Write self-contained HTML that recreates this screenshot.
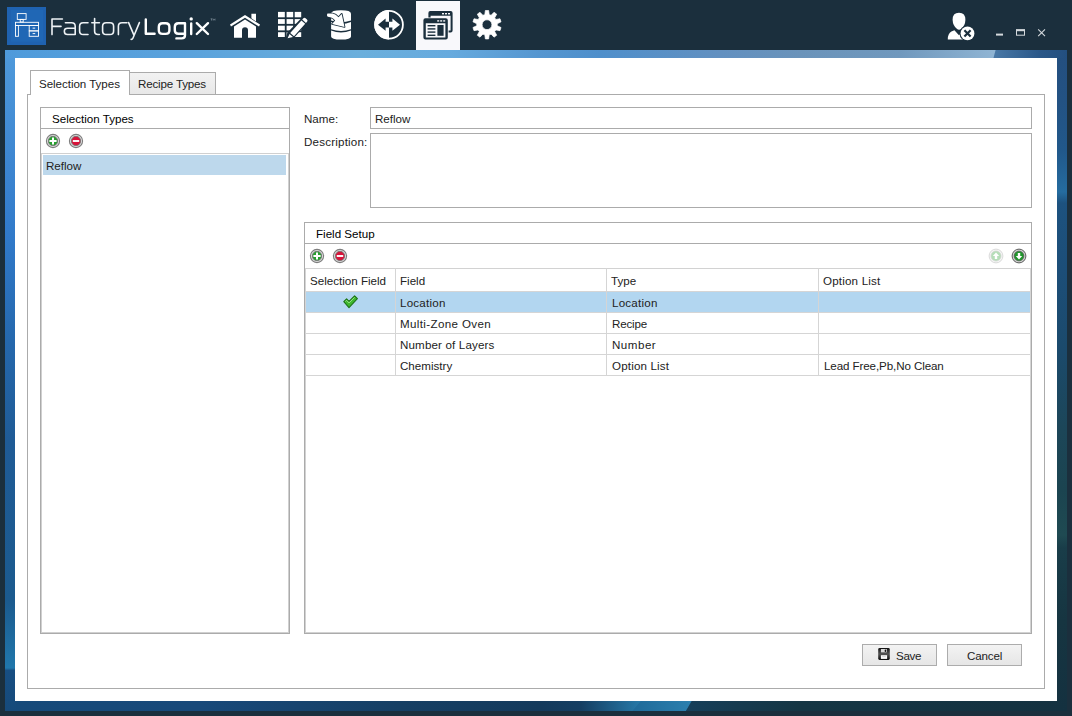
<!DOCTYPE html>
<html>
<head>
<meta charset="utf-8">
<title>FactoryLogix</title>
<style>
*{box-sizing:border-box;margin:0;padding:0}
html,body{width:1072px;height:716px;overflow:hidden;background:#1b2f3d}
body{font-family:"Liberation Sans",sans-serif;font-size:11.6px;color:#222;position:relative}
.abs{position:absolute}
#topbar{left:0;top:0;width:1072px;height:50px;background:#1b2f3d}
#bg{left:5px;top:50px;width:1062px;height:661px;overflow:hidden}
#panel{left:15px;top:58px;width:1042px;height:643px;background:#fff}
.t{position:absolute;white-space:nowrap;line-height:14px;height:14px}
.box{position:absolute;border:1px solid #ababab;background:#fff}
.hl{position:absolute;height:1px;background:#ababab}
.vl{position:absolute;width:1px;background:#d5d5d5}
.gl{position:absolute;height:1px;background:#d5d5d5}
.btn{position:absolute;border:1px solid #acacac;background:linear-gradient(#f3f3f3,#e6e6e6);height:22px;width:75px}
</style>
</head>
<body>
<div id="bg" class="abs">
<svg width="1062" height="661" viewBox="5 50 1062 661"><defs><linearGradient id="gl" gradientUnits="userSpaceOnUse" x1="0" y1="50" x2="0" y2="711"><stop offset="0.0000" stop-color="#4f9adb"/><stop offset="0.1513" stop-color="#3f88d2"/><stop offset="0.2874" stop-color="#3079c9"/><stop offset="0.4387" stop-color="#2568ad"/><stop offset="0.5900" stop-color="#1f5b96"/><stop offset="0.8321" stop-color="#1b5a8e"/><stop offset="0.9349" stop-color="#2077ab"/><stop offset="0.9387" stop-color="#174e82"/><stop offset="1.0000" stop-color="#164a7a"/></linearGradient><linearGradient id="gt" gradientUnits="userSpaceOnUse" x1="5" y1="0" x2="993" y2="0"><stop offset="0.0000" stop-color="#4f9bdb"/><stop offset="0.1771" stop-color="#5aa2dc"/><stop offset="0.3593" stop-color="#6bafdc"/><stop offset="0.4504" stop-color="#66aade"/><stop offset="0.5415" stop-color="#5596d0"/><stop offset="0.6022" stop-color="#4f8fcb"/><stop offset="0.7237" stop-color="#6290c0"/><stop offset="0.8047" stop-color="#6a93ba"/><stop offset="0.9059" stop-color="#7098bd"/><stop offset="1.0000" stop-color="#8fb4d3"/></linearGradient><linearGradient id="gt2" gradientUnits="userSpaceOnUse" x1="993" y1="0" x2="1067" y2="0"><stop offset="0.0000" stop-color="#4a79a7"/><stop offset="0.6351" stop-color="#2a5788"/><stop offset="1.0000" stop-color="#234f7f"/></linearGradient><linearGradient id="gr" gradientUnits="userSpaceOnUse" x1="0" y1="50" x2="0" y2="711"><stop offset="0.0000" stop-color="#244f7f"/><stop offset="0.0756" stop-color="#235283"/><stop offset="0.1513" stop-color="#21588a"/><stop offset="0.2148" stop-color="#256c9f"/><stop offset="0.2315" stop-color="#1d527f"/><stop offset="0.3328" stop-color="#1c4e78"/><stop offset="0.4539" stop-color="#1b4a6c"/><stop offset="0.5749" stop-color="#1c4658"/><stop offset="0.6657" stop-color="#1b4450"/><stop offset="0.7337" stop-color="#1f4a52"/><stop offset="0.7534" stop-color="#193d49"/><stop offset="0.8623" stop-color="#163541"/><stop offset="1.0000" stop-color="#143140"/></linearGradient><linearGradient id="gb1" gradientUnits="userSpaceOnUse" x1="5" y1="0" x2="640" y2="0"><stop offset="0.0000" stop-color="#164a7a"/><stop offset="0.3071" stop-color="#18497a"/><stop offset="0.6220" stop-color="#163f64"/><stop offset="0.8425" stop-color="#143a5c"/><stop offset="0.9071" stop-color="#153e62"/><stop offset="1.0000" stop-color="#2679a8"/></linearGradient><linearGradient id="gb2" gradientUnits="userSpaceOnUse" x1="632" y1="0" x2="690" y2="0"><stop offset="0.0000" stop-color="#1f6a99"/><stop offset="1.0000" stop-color="#2b7fae"/></linearGradient><linearGradient id="gb3" gradientUnits="userSpaceOnUse" x1="686" y1="0" x2="1067" y2="0"><stop offset="0.0000" stop-color="#173f5a"/><stop offset="0.2992" stop-color="#153644"/><stop offset="1.0000" stop-color="#143140"/></linearGradient></defs><rect x="5" y="50" width="1062" height="661" fill="#1d5a94"/><rect x="5" y="50" width="1000" height="9" fill="url(#gt)"/><path d="M995.6,50 L1067,50 L1067,59 L993.2,59Z" fill="url(#gt2)"/><rect x="5" y="700" width="640" height="11" fill="url(#gb1)"/><path d="M641.6,700 L693,700 L686,711 L632.3,711Z" fill="url(#gb2)"/><path d="M692.2,700 L1067,700 L1067,711 L685.9,711Z" fill="url(#gb3)"/><rect x="5" y="58" width="11" height="653" fill="url(#gl)"/><path d="M5,50 H16 V58 L5,58Z" fill="url(#gl)" opacity="0.6"/><rect x="1056" y="58" width="11" height="653" fill="url(#gr)"/></svg>
</div>
<div id="topbar" class="abs"></div>
<svg class="abs" style="left:0;top:0" width="1072" height="50" viewBox="0 0 1072 50">
<!-- logo box -->
<rect x="7" y="7" width="39" height="38" fill="#1f62b0"/>
<rect x="11" y="9.6" width="32" height="32" fill="#2067b5"/>
<g fill="none" stroke="#fff" stroke-width="0.9">
<rect x="17.3" y="13.6" width="8.8" height="5.8"/>
<rect x="20.2" y="19.4" width="3" height="2.6"/>
<rect x="15.5" y="22.3" width="23" height="3.2"/>
<rect x="15.5" y="25.5" width="2.9" height="10.8"/>
<rect x="29.2" y="25.5" width="9.3" height="5.4"/>
<rect x="29.2" y="30.9" width="9.3" height="5.4"/>
</g>
<rect x="32.6" y="27.6" width="2.6" height="1.1" fill="#dfe9f5"/>
<rect x="32.6" y="33" width="2.6" height="1.1" fill="#dfe9f5"/>
<!-- Factory (thin) -->
<g fill="none" stroke="#eef2f5" stroke-width="1.6" stroke-linecap="round" stroke-linejoin="round">
<path d="M52,34.6 V19 H62.4 M52,26.4 H61"/>
<path d="M65.4,22.7 H71.6 Q75.2,22.7 75.2,26.2 V34.5 H67.6 Q64.4,34.5 64.4,31.8 V30.8 Q64.4,28.2 67.6,28.2 H75.2"/>
<path d="M88,22.7 H83.2 Q79.6,22.7 79.6,26.3 V30.9 Q79.6,34.5 83.2,34.5 H88"/>
<path d="M94.6,18.6 V31 Q94.6,34.5 98,34.5 H99.4 M91.8,22.7 H99.4"/>
<path d="M106.2,22.7 H110 Q113.6,22.7 113.6,26.3 V30.9 Q113.6,34.5 110,34.5 H106.2 Q102.6,34.5 102.6,30.9 V26.3 Q102.6,22.7 106.2,22.7Z"/>
<path d="M118.4,34.6 V26.3 Q118.4,22.7 122,22.7 H127"/>
<path d="M128.6,22.6 L133.6,34.4 M139.4,22.6 L133,38 Q132.4,39.4 131.2,39.4"/>
</g>
<!-- Logix (bold) -->
<g fill="none" stroke="#fff" stroke-width="2.4" stroke-linecap="round" stroke-linejoin="round">
<path d="M145.8,19.4 V33.8 H154.6"/>
<path d="M162.6,23.3 H165.6 Q169.4,23.3 169.4,27 V30.2 Q169.4,33.9 165.6,33.9 H162.6 Q158.8,33.9 158.8,30.2 V27 Q158.8,23.3 162.6,23.3Z"/>
<path d="M185,33.7 H178.4 Q174.8,33.7 174.8,30.2 V27 Q174.8,23.3 178.4,23.3 H185 V35.2 Q185,38.4 181.6,38.4 H176.4"/>
<path d="M191.2,23.4 V34"/>
<path d="M196.8,23.2 L208,34 M208,23.2 L196.8,34"/>
</g>
<circle cx="191.2" cy="18.9" r="1.7" fill="#fff"/>
<g fill="none" stroke="#8a99a5" stroke-width="0.6"><path d="M210.6,18.8 H212.4 M211.5,18.8 V20.6 M213.2,20.6 V18.8 L214.1,19.8 L215,18.8 V20.6"/></g>
<!-- home -->
<g fill="#fff">
<path d="M251.4,13.8 H256 V21.5 L251.4,18.2Z"/>
<path d="M245,15 L260,24.6 L259,26.6 L245,17.7 L231,26.6 L230,24.6Z"/>
<path d="M245,19.4 L256,26.4 V37.8 H248 V30.2 Q248,27.2 245,27.2 Q242,27.2 242,30.2 V37.8 H234 V26.4Z"/>
</g>
<!-- grid + pencil -->
<g fill="#fff">
<rect x="278" y="11.9" width="6.8" height="5.4"/><rect x="286.6" y="11.9" width="6.6" height="5.4"/><rect x="294.7" y="11.9" width="6.5" height="5.4"/>
<rect x="278" y="19.1" width="6.8" height="4.8"/><rect x="286.6" y="19.1" width="6.6" height="4.8"/><rect x="294.7" y="19.1" width="6.5" height="4.8"/>
<rect x="278" y="25.7" width="6.8" height="4.7"/><rect x="286.6" y="25.7" width="6.6" height="4.7"/><rect x="294.7" y="25.7" width="6.5" height="4.7"/>
<rect x="278" y="32.2" width="6.8" height="4.8"/><rect x="286.6" y="32.2" width="6.6" height="4.8"/><rect x="294.7" y="32.2" width="6.5" height="4.8"/>
</g>
<path d="M303.2,16.2 L309,21 L293.5,38.5 L285.4,39.6 L287.4,32.6Z" fill="#1b2f3d"/>
<path d="M303.4,18.2 Q304.4,17.2 305.6,18.2 L307,19.4 Q308,20.4 307.2,21.5 L306,22.9 L302.2,19.6Z M301.4,20.5 L305.2,23.8 L294,36.2 L290.2,33Z M289.5,33.9 L293,36.9 L287.6,38.3Z" fill="#fff"/>
<!-- database -->
<g fill="#fff">
<path d="M331.1,13.6 Q331.1,10.2 341,10.2 Q351,10.2 351,13.6 V20.6 Q346,22.4 341,22.4 Q336,22.4 331.1,20.6Z"/>
<path d="M331.1,22 Q336,23.9 341,23.9 Q346,23.9 351,22 V29.2 Q346,31 341,31 Q336,31 331.1,29.2Z"/>
<path d="M331.1,30.6 Q336,32.5 341,32.5 Q346,32.5 351,30.6 V36.4 Q351,39.5 341,39.5 Q331.1,39.5 331.1,36.4Z"/>
</g>
<g transform="translate(0.2,0.6)"><path d="M327.4,13 H332.6 Q335.6,13.4 338.3,16.7 L341.5,13.4 L344.3,26.3 L331.9,23.3 L335,19.8 Q333.4,17.6 331,16.8 L327.8,16.2 Q326.8,16 326.8,14.6 Q326.8,13 327.4,13Z" fill="#fff" stroke="#1b2f3d" stroke-width="1.8" stroke-linejoin="round"/><path d="M327.4,13 H332.6 Q335.6,13.4 338.3,16.7 L341.5,13.4 L344.3,26.3 L331.9,23.3 L335,19.8 Q333.4,17.6 331,16.8 L327.8,16.2 Q326.8,16 326.8,14.6 Q326.8,13 327.4,13Z" fill="#fff"/></g>

<!-- circle arrows -->
<circle cx="389" cy="24.7" r="13.9" fill="none" stroke="#fff" stroke-width="1.8"/>
<path d="M389,10 A14.7,14.7 0 0,0 389,39.4Z" fill="#fff"/>
<path d="M389,21.8 H385.6 V18.6 L378,24.7 L385.6,30.8 V27.6 H389Z" fill="#1b2f3d"/>
<path d="M389,21.8 H392.4 V18.6 L400,24.7 L392.4,30.8 V27.6 H389Z" fill="#fff"/>
<!-- selected windows -->
<rect x="416" y="1" width="44" height="49" fill="#f8f8fb"/>
<g fill="#1b2f3d">
<path d="M430.2,11 H450.6 Q452.6,11 452.6,13 V30.4 Q452.6,32.4 450.6,32.4 H448.6 V30.4 H450.6 V15.8 H430.6 V17.4 H428.4 V13 Q428.4,11 430.2,11Z"/>
<path d="M425.4,18.2 H445.8 Q447.8,18.2 447.8,20.2 V37.6 Q447.8,39.6 445.8,39.6 H425.4 Q423.4,39.6 423.4,37.6 V20.2 Q423.4,18.2 425.4,18.2Z M425.8,23.2 V37.4 H445.4 V23.2Z"/>
<rect x="427.6" y="25" width="7.8" height="1.4"/><rect x="427.6" y="28.2" width="7.8" height="1.4"/><rect x="427.6" y="31.4" width="7.8" height="1.4"/><rect x="427.6" y="34.6" width="7.8" height="1.4"/>
<rect x="437.4" y="25" width="6.2" height="10.8"/>
</g>
<g fill="#f8f8fb">
<rect x="442" y="13" width="2" height="1.4"/><rect x="445" y="13" width="2" height="1.4"/><rect x="448" y="13" width="2" height="1.4"/>
<rect x="437.2" y="20.2" width="2" height="1.4"/><rect x="440.2" y="20.2" width="2" height="1.4"/><rect x="443.2" y="20.2" width="2" height="1.4"/>
</g>
<!-- gear -->
<path d="M484.80,14.64 L485.36,10.49 L488.64,10.49 L489.20,14.64 L491.14,15.27 L494.02,12.24 L496.68,14.17 L494.69,17.85 L495.89,19.50 L500.00,18.75 L501.02,21.87 L497.25,23.68 L497.25,25.72 L501.02,27.53 L500.00,30.65 L495.89,29.90 L494.69,31.55 L496.68,35.23 L494.02,37.16 L491.14,34.13 L489.20,34.76 L488.64,38.91 L485.36,38.91 L484.80,34.76 L482.86,34.13 L479.98,37.16 L477.32,35.23 L479.31,31.55 L478.11,29.90 L474.00,30.65 L472.98,27.53 L476.75,25.72 L476.75,23.68 L472.98,21.87 L474.00,18.75 L478.11,19.50 L479.31,17.85 L477.32,14.17 L479.98,12.24 L482.86,15.27Z M491.90,24.70 A4.9,4.9 0 1,0 482.10,24.70 A4.9,4.9 0 1,0 491.90,24.70Z" fill="#fff" fill-rule="evenodd" stroke="#fff" stroke-width="0.7" stroke-linejoin="round"/>
<!-- user -->
<g fill="#fff">
<path d="M959,12.7 Q965.6,12.7 965.4,20 Q965.2,25.4 961.4,28.8 Q959,30.6 956.8,28.8 Q952.8,25.4 952.6,20 Q952.4,12.7 959,12.7Z"/>
<path d="M947.8,39.5 Q947.8,33.4 951.4,31.6 L954.4,30.2 L959,35.2 L962,32 L968,39.5Z"/>
</g>
<circle cx="967.5" cy="33.4" r="8" fill="#1b2f3d"/>
<circle cx="967.5" cy="33.4" r="6.9" fill="#fff"/>
<path d="M964.4,30.3 L970.6,36.5 M970.6,30.3 L964.4,36.5" stroke="#1b2f3d" stroke-width="2.2" fill="none"/>
<!-- window controls -->
<rect x="996" y="33.6" width="7" height="2" fill="#d4d9dd"/>
<rect x="1016.5" y="30" width="8" height="5.2" fill="none" stroke="#d4d9dd" stroke-width="1"/>
<rect x="1016" y="29.2" width="9" height="2" fill="#d4d9dd"/>
<path d="M1038.2,29.4 L1045,36.2 M1045,29.4 L1038.2,36.2" stroke="#d4d9dd" stroke-width="1.1" fill="none"/>
</svg>
<div id="panel" class="abs"></div>
<!-- tab control -->
<div class="box" style="left:27px;top:94px;width:1018px;height:595px"></div>
<div class="abs" style="left:129px;top:72px;width:87px;height:23px;border:1px solid #ababab;background:linear-gradient(#f2f2f2,#e8e8e8)"></div>
<div class="abs" style="left:30px;top:70px;width:100px;height:25px;border:1px solid #ababab;border-bottom:none;background:#fff"></div>
<div class="t" style="left:39px;top:77px;letter-spacing:-0.05px">Selection Types</div>
<div class="t" style="left:138px;top:77px;letter-spacing:-0.17px">Recipe Types</div>
<!-- left group -->
<div class="box" style="left:40px;top:107px;width:250px;height:527px"></div>
<div class="hl" style="left:40px;top:128px;width:250px"></div>
<div class="abs" style="left:41px;top:153px;width:248px;height:480px;border:1px solid #d0d0d0"></div>
<div class="t" style="left:52px;top:112px;color:#000">Selection Types</div>
<svg class="abs" style="left:45px;top:133px" width="16" height="16" viewBox="-8 -8 16 16"><circle r="6.6" fill="#e2e2e2" stroke="#7d7d7d" stroke-width="1.1"/><circle r="4.7" fill="#27a02f" stroke="#757575" stroke-width="0.9"/><path d="M-3.6,0 H3.6 M0,-3.6 V3.6" stroke="#fff" stroke-width="2"/></svg><svg class="abs" style="left:68px;top:133px" width="16" height="16" viewBox="-8 -8 16 16"><circle r="6.6" fill="#e2e2e2" stroke="#7d7d7d" stroke-width="1.1"/><circle r="4.7" fill="#d8143a" stroke="#757575" stroke-width="0.9"/><path d="M-3.2,0 H3.2" stroke="#fff" stroke-width="1.9"/></svg>
<div class="abs" style="left:43px;top:155px;width:243px;height:20px;background:#bdd8ec"></div>
<div class="t" style="left:46px;top:159px">Reflow</div>
<!-- name/desc -->
<div class="t" style="left:304px;top:112px">Name:</div>
<div class="box" style="left:370px;top:107px;width:662px;height:22px"></div>
<div class="t" style="left:375px;top:112px">Reflow</div>
<div class="t" style="left:304px;top:135px;letter-spacing:0.19px">Description:</div>
<div class="box" style="left:370px;top:133px;width:662px;height:75px"></div>
<!-- field setup -->
<div class="box" style="left:304px;top:222px;width:728px;height:412px"></div>
<div class="hl" style="left:304px;top:243px;width:728px"></div>
<div class="t" style="left:316px;top:227px;color:#000">Field Setup</div>
<svg class="abs" style="left:309px;top:248px" width="16" height="16" viewBox="-8 -8 16 16"><circle r="6.6" fill="#e2e2e2" stroke="#7d7d7d" stroke-width="1.1"/><circle r="4.7" fill="#27a02f" stroke="#757575" stroke-width="0.9"/><path d="M-3.6,0 H3.6 M0,-3.6 V3.6" stroke="#fff" stroke-width="2"/></svg><svg class="abs" style="left:332px;top:248px" width="16" height="16" viewBox="-8 -8 16 16"><circle r="6.6" fill="#e2e2e2" stroke="#7d7d7d" stroke-width="1.1"/><circle r="4.7" fill="#d8143a" stroke="#757575" stroke-width="0.9"/><path d="M-3.2,0 H3.2" stroke="#fff" stroke-width="1.9"/></svg><svg class="abs" style="left:988px;top:248px;opacity:.35" width="16" height="16" viewBox="-8 -8 16 16"><circle r="6.9" fill="#e4e4e4" stroke="#8e8e8e" stroke-width="0.9"/><circle r="5" fill="#2fa336" stroke="#7a8a7a" stroke-width="0.7"/><path d="M0,-3.4 L3.2,0 H1.2 V3 H-1.2 V0 H-3.2Z" fill="#fff"/></svg><svg class="abs" style="left:1011px;top:248px" width="16" height="16" viewBox="-8 -8 16 16"><circle r="6.9" fill="#cfcfcf" stroke="#5e5e5e" stroke-width="1"/><circle r="4.8" fill="#1f982b" stroke="#4f5f4f" stroke-width="0.8"/><path d="M0,3.4 L3.2,0 H1.2 V-3 H-1.2 V0 H-3.2Z" fill="#fff"/></svg>
<div class="abs" style="left:305px;top:268px;width:726px;height:365px;border:1px solid #d2d2d2"></div>
<div class="abs" style="left:306px;top:292px;width:724px;height:20px;background:#b2d6f0"></div>
<div class="gl" style="left:305px;top:291px;width:726px"></div>
<div class="gl" style="left:305px;top:312px;width:726px"></div>
<div class="gl" style="left:305px;top:333px;width:726px"></div>
<div class="gl" style="left:305px;top:354px;width:726px"></div>
<div class="gl" style="left:305px;top:375px;width:726px"></div>
<div class="vl" style="left:305px;top:268px;height:108px"></div>
<div class="vl" style="left:395px;top:268px;height:108px"></div>
<div class="vl" style="left:606px;top:268px;height:108px"></div>
<div class="vl" style="left:818px;top:268px;height:108px"></div>
<div class="vl" style="left:1030px;top:268px;height:108px"></div>
<div class="t" style="left:310px;top:274px">Selection Field</div>
<div class="t" style="left:400px;top:274px">Field</div>
<div class="t" style="left:611px;top:274px">Type</div>
<div class="t" style="left:823px;top:274px;letter-spacing:0.18px">Option List</div>
<div class="t" style="left:400px;top:296px;letter-spacing:0.22px">Location</div>
<div class="t" style="left:612px;top:296px;letter-spacing:0.22px">Location</div>
<div class="t" style="left:400px;top:317px;letter-spacing:0.36px">Multi-Zone Oven</div>
<div class="t" style="left:612px;top:317px;letter-spacing:-0.17px">Recipe</div>
<div class="t" style="left:400px;top:338px;letter-spacing:0.15px">Number of Layers</div>
<div class="t" style="left:612px;top:338px;letter-spacing:0.5px">Number</div>
<div class="t" style="left:400px;top:359px">Chemistry</div>
<div class="t" style="left:612px;top:359px;letter-spacing:0.16px">Option List</div>
<div class="t" style="left:824px;top:359px;letter-spacing:-0.1px">Lead Free,Pb,No Clean</div>
<svg class="abs" style="left:342px;top:294px" width="17" height="16" viewBox="0 0 17 16"><path d="M1.8,7.6 L4.6,4.8 L7,7.4 L12.6,1.8 L15.4,4.6 L7,13.6Z" fill="#3fb82e" stroke="#1c7416" stroke-width="1.1" stroke-linejoin="round"/><path d="M3.4,7.4 L4.6,6.3 L7,8.9 L12.6,3.3" stroke="#9be88a" stroke-width="1" fill="none"/></svg>
<!-- buttons -->
<div class="btn" style="left:862px;top:644px"></div>
<div class="btn" style="left:947px;top:644px"></div>
<svg class="abs" style="left:878px;top:648px" width="12" height="12" viewBox="0 0 12 12"><defs><linearGradient id="fl" x1="0" y1="0" x2="0" y2="1"><stop offset="0" stop-color="#111"/><stop offset="0.5" stop-color="#555"/><stop offset="1" stop-color="#0a0a0a"/></linearGradient></defs><rect x="0.2" y="0.1" width="11.6" height="11.8" rx="1.4" fill="url(#fl)"/><rect x="2.9" y="1" width="5.9" height="3.4" fill="#d9d9d9"/><rect x="6.7" y="1.5" width="1.4" height="2.4" rx="0.6" fill="#111"/><rect x="2.9" y="7.2" width="6.2" height="3.7" fill="#fdfdfd"/><rect x="4.2" y="8.4" width="3.6" height="0.7" fill="#c4c4c4"/></svg>
<div class="t" style="left:896px;top:649px;letter-spacing:-0.3px">Save</div>
<div class="t" style="left:967px;top:649px;letter-spacing:-0.17px">Cancel</div>

</body>
</html>
